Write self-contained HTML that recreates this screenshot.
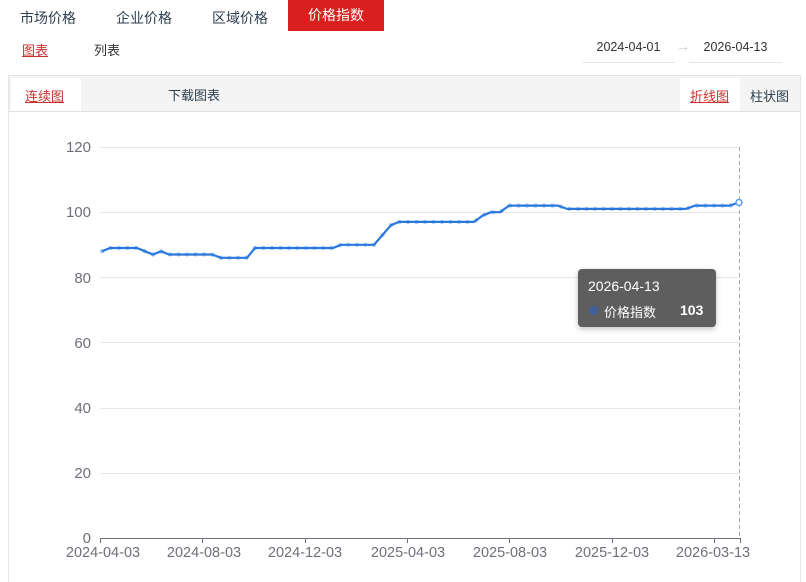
<!DOCTYPE html>
<html><head><meta charset="utf-8"><style>
html{height:582px;overflow:hidden}
body{margin:0;width:806px;height:582px;background:#fff;font-family:"Liberation Sans","Noto Sans CJK SC",sans-serif;position:relative;overflow:hidden;color:#333}
.a{position:absolute;white-space:nowrap}
.tab{font-size:14px;color:#2c3e50;top:8px}
</style></head><body>
<div class="a tab" style="left:20px">市场价格</div>
<div class="a tab" style="left:116px">企业价格</div>
<div class="a tab" style="left:212px">区域价格</div>
<div class="a" style="left:288px;top:0;width:96px;height:31px;background:#d9201f;color:#fff;font-size:14px;line-height:31px;text-align:center">价格指数</div>
<div class="a" style="left:22px;top:40px;font-size:13px;color:#c8332f;text-decoration:underline">图表</div>
<div class="a" style="left:94px;top:40px;font-size:13px;color:#333">列表</div>
<div class="a" style="left:582px;top:40px;width:93px;font-size:12.5px;text-align:center;color:#333;border-bottom:1px solid #e6e6e6;padding-bottom:8px">2024-04-01</div>
<div class="a" style="left:676px;top:38px;font-size:14px;color:#ccc">→</div>
<div class="a" style="left:689px;top:40px;width:93px;font-size:12.5px;text-align:center;color:#333;border-bottom:1px solid #e6e6e6;padding-bottom:8px">2026-04-13</div>
<div class="a" style="left:8px;top:75px;width:791px;height:520px;border:1px solid #e4e4e4;border-bottom:none"></div>
<div class="a" style="left:9px;top:76px;width:791px;height:35px;background:#f4f4f4;border-bottom:1px solid #e0e0e0"></div>
<div class="a" style="left:11px;top:78px;width:70px;height:33px;background:#fff"></div>
<div class="a" style="left:25px;top:86px;font-size:13px;color:#c8332f;text-decoration:underline">连续图</div>
<div class="a" style="left:168px;top:85px;font-size:13px;color:#2c3e50">下载图表</div>
<div class="a" style="left:680px;top:78px;width:60px;height:33px;background:#fff"></div>
<div class="a" style="left:690px;top:86px;font-size:13px;color:#c8332f;text-decoration:underline">折线图</div>
<div class="a" style="left:750px;top:86px;font-size:13px;color:#2c3e50">柱状图</div>
<svg class="a" style="left:0;top:0" width="806" height="582" id="s">
<g stroke="#e8e8e8" stroke-width="1">
<line x1="100" x2="740" y1="147.5" y2="147.5"/><line x1="100" x2="740" y1="212.5" y2="212.5"/><line x1="100" x2="740" y1="277.5" y2="277.5"/><line x1="100" x2="740" y1="342.5" y2="342.5"/><line x1="100" x2="740" y1="408.5" y2="408.5"/><line x1="100" x2="740" y1="473.5" y2="473.5"/>
</g>
<line x1="739.5" x2="739.5" y1="147" y2="538" stroke="#aaa" stroke-dasharray="4,3"/>
<line x1="100" x2="741" y1="538.5" y2="538.5" stroke="#6e7079"/>
<g stroke="#6e7079"><line x1="100.5" x2="100.5" y1="538" y2="543"/><line x1="202.5" x2="202.5" y1="538" y2="543"/><line x1="305.5" x2="305.5" y1="538" y2="543"/><line x1="407.5" x2="407.5" y1="538" y2="543"/><line x1="509.5" x2="509.5" y1="538" y2="543"/><line x1="612.5" x2="612.5" y1="538" y2="543"/><line x1="714.5" x2="714.5" y1="538" y2="543"/><line x1="740.5" x2="740.5" y1="538" y2="543"/></g>
<g font-size="15" fill="#6e7079" text-anchor="end" font-family="Liberation Sans,sans-serif">
<text x="91" y="152">120</text><text x="91" y="217">100</text><text x="91" y="283">80</text><text x="91" y="348">60</text><text x="91" y="413">40</text><text x="91" y="478">20</text><text x="91" y="543">0</text>
</g>
<g font-size="14.5" fill="#6e7079" text-anchor="middle" font-family="Liberation Sans,sans-serif">
<text x="103" y="557">2024-04-03</text><text x="204" y="557">2024-08-03</text><text x="305" y="557">2024-12-03</text><text x="408" y="557">2025-04-03</text><text x="510" y="557">2025-08-03</text><text x="612" y="557">2025-12-03</text><text x="713" y="557">2026-03-13</text>
</g>
<g id="pts" fill="#a9ccf6"></g>
<polyline id="ln" fill="none" stroke="#2a78de" stroke-width="2.2" stroke-linejoin="round"/>
<circle cx="739" cy="202.5" r="3" fill="#fff" stroke="#5a9bea" stroke-width="1.5"/>
</svg>
<div class="a" style="left:578px;top:269px;width:138px;height:58px;background:#5e5e5e;border-radius:4px;box-shadow:0 2px 6px rgba(0,0,0,.25)"></div>
<div class="a" style="left:588px;top:278px;font-size:14px;color:#fff">2026-04-13</div>
<div class="a" style="left:589px;top:306px;width:9px;height:9px;border-radius:50%;background:#3e5f9a"></div>
<div class="a" style="left:604px;top:302px;font-size:13px;color:#fff">价格指数</div>
<div class="a" style="left:680px;top:302px;font-size:14px;color:#fff;font-weight:bold">103</div>
<script>
var segs=[[102,88],[110,89],[137,89],[145,88],[153,87],[161,88],[169,87],[212,87],[221,86],[247,86],[255,89],[333,89],[341,90],[374,90],[391,96],[399,97],[474,97],[483,99],[491,100],[500,100],[509,102],[558,102],[567,101],[686,101],[695,102],[730,102],[739,103]];
function yv(v){return 538-v*391/120}
var p=segs.map(function(s){return s[0]+','+yv(s[1]).toFixed(1)}).join(' ');
document.getElementById('ln').setAttribute('points',p);
var g=document.getElementById('pts'),h='';
function val(x){for(var i=0;i<segs.length-1;i++){if(x>=segs[i][0]&&x<=segs[i+1][0]){var t=(x-segs[i][0])/(segs[i+1][0]-segs[i][0]);return segs[i][1]+t*(segs[i+1][1]-segs[i][1]);}}return 103}
for(var x=102;x<735;x+=8.5){h+='<circle cx="'+x+'" cy="'+yv(val(x)).toFixed(1)+'" r="2.2"/>'}
g.innerHTML=h;
</script>
</body></html>
